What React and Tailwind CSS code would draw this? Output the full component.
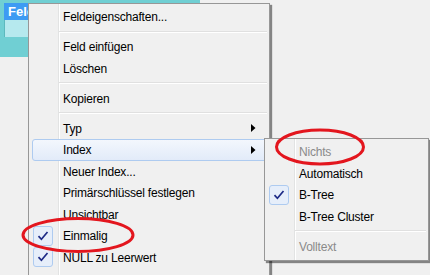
import React from 'react'

const font = "font-['Liberation_Sans','Arial',sans-serif]"

function Check() {
  return (
    <span className="flex h-[20px] w-[20px] shrink-0 items-center justify-center rounded-[3px] border border-[#aecbf0] bg-[#e6eefa]">
      <svg width="12" height="12" viewBox="0 0 12 12">
        <path d="M1.5 6.2 L4.4 9.3 L10.5 2" fill="none" stroke="#1d2a86" strokeWidth="1.7" />
      </svg>
    </span>
  )
}

function Arrow() {
  return (
    <svg width="5" height="8" viewBox="0 0 5 8" className="ml-auto mr-[10px]">
      <path d="M0 0 L4.5 4 L0 8 Z" fill="#000" />
    </svg>
  )
}

function Item({ label, checked, arrow, active, disabled }) {
  return (
    <div
      className={`ml-[3px] mr-[2px] flex h-[21.5px] items-center rounded-[3px] border ${active ? 'border-[#aecbf0] bg-gradient-to-b from-[#f3f7fd] to-[#e2ebf9]' : 'border-transparent'}`}
    >
      {checked ? <Check /> : <span className="w-[20px] shrink-0" />}
      <span className={`ml-[10px] whitespace-nowrap pt-px text-[12px] tracking-[-0.2px] ${disabled ? 'text-[#8a8a8a]' : 'text-black'}`}>{label}</span>
      {arrow && <Arrow />}
    </div>
  )
}

function Separator() {
  return (
    <div className="flex h-[8.5px] flex-col justify-center pl-[30px] pr-[2px]">
      <div className="h-px bg-[#e0e0e0]" />
      <div className="h-px bg-white" />
    </div>
  )
}

function Gutter() {
  return (
    <div className="pointer-events-none absolute bottom-0 left-[29px] top-0 flex">
      <div className="w-px bg-[#e2e3e3]" />
      <div className="w-px bg-white" />
    </div>
  )
}

export default function App() {
  return (
    <div className={`relative h-[275px] w-[430px] overflow-hidden bg-[#f0f0f0] ${font}`}>
      {/* window behind the menu */}
      <div className="h-[57px] w-[200px] bg-[#70cfd3] pl-[4px] pt-[3px]">
        <div className="flex h-[17px] items-center bg-[#3d9bf3] pl-[4px] text-[13px] font-bold text-white">Feld</div>
        <div className="h-[17px] border-l border-[#5cb9be] bg-[#b6e9ee]" />
      </div>

      {/* main context menu */}
      <div className="absolute left-[28px] top-[3px] h-[290px] w-[242px] border border-[#979797] bg-[#f0f0f0] pt-[2px] shadow-[2px_2px_1px_rgba(0,0,0,0.45)]">
        <Gutter />
        <div className="relative">
          <Item label="Feldeigenschaften..." />
          <Separator />
          <Item label="Feld einfügen" />
          <Item label="Löschen" />
          <Separator />
          <Item label="Kopieren" />
          <Separator />
          <Item label="Typ" arrow />
          <Item label="Index" arrow active />
          <Item label="Neuer Index..." />
          <Item label="Primärschlüssel festlegen" />
          <Item label="Unsichtbar" />
          <Item label="Einmalig" checked />
          <Item label="NULL zu Leerwert" checked />
        </div>
      </div>

      {/* Index submenu */}
      <div className="absolute left-[264px] top-[138px] h-[123px] w-[165px] border border-[#979797] bg-[#f0f0f0] pt-[2px] shadow-[2px_2px_1px_rgba(0,0,0,0.45)]">
        <Gutter />
        <div className="relative">
          <Item label="Nichts" disabled />
          <Item label="Automatisch" />
          <Item label="B-Tree" checked />
          <Item label="B-Tree Cluster" />
          <Separator />
          <Item label="Volltext" disabled />
        </div>
      </div>

      {/* red annotation marks */}
      <svg className="pointer-events-none absolute left-0 top-0" width="430" height="275">
        <ellipse cx="78" cy="235" rx="55" ry="16.5" fill="none" stroke="#e3161e" strokeWidth="3" />
        <ellipse cx="320" cy="147" rx="43.5" ry="17" fill="none" stroke="#e3161e" strokeWidth="3" />
      </svg>
    </div>
  )
}
